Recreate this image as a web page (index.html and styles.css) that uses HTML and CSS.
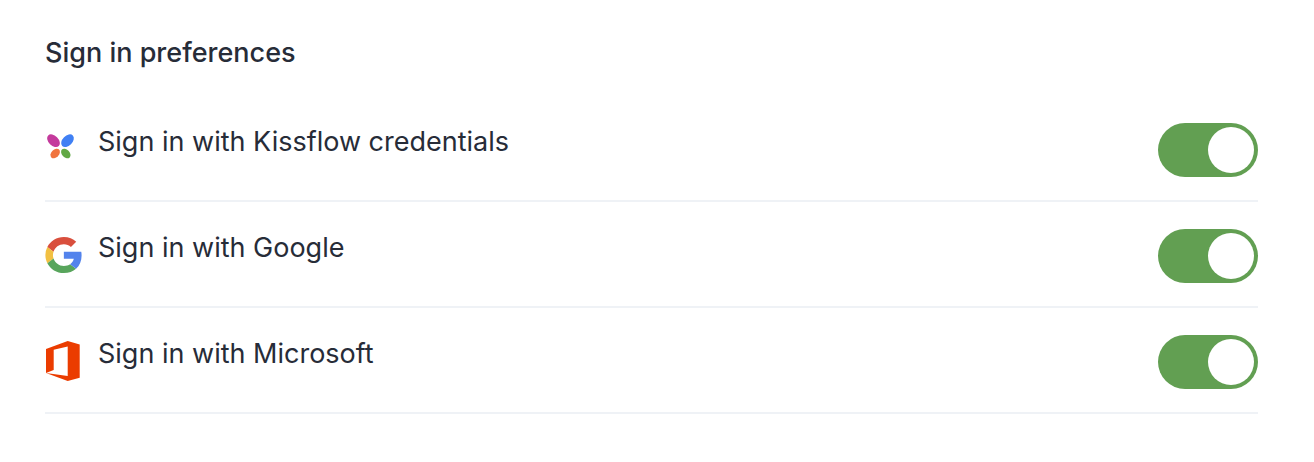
FILE: index.html
```html
<!DOCTYPE html>
<html lang="en">
<head>
<meta charset="utf-8">
<title>Sign in preferences</title>
<link rel="stylesheet" href="styles.css">
</head>
<body>
<main class="preferences">
  <h1 class="title">Sign in preferences</h1>
  <ul class="options">
    <li class="option">
      <svg class="icon" viewBox="0 0 38 44" aria-hidden="true">
        <ellipse fill="#c43a9c" cx="8.500" cy="12.700" rx="7.500" ry="4.900" transform="rotate(45 8.500 12.700)"/>
        <ellipse fill="#4080f4" cx="22.500" cy="12.700" rx="7.500" ry="4.900" transform="rotate(-45 22.500 12.700)"/>
        <ellipse fill="#f0743e" cx="10.200" cy="25.500" rx="5.500" ry="3.800" transform="rotate(-45 10.200 25.500)"/>
        <ellipse fill="#62a845" cx="20.800" cy="25.500" rx="5.500" ry="3.800" transform="rotate(45 20.800 25.500)"/>
      </svg>
      <label class="label" for="kissflow">Sign in with Kissflow credentials</label>
      <input class="toggle" type="checkbox" role="switch" id="kissflow" checked>
    </li>
    <li class="option">
      <svg class="icon" viewBox="0 0 38 44" aria-hidden="true">
        <g transform="translate(-1.300 1.400) scale(.84 .82)">
          <path fill="#d94f3d" d="M24 10.750c3.230 0 6.130 1.110 8.410 3.290l6.310-6.310C34.910 4.180 29.930 2 24 2 15.400 2 7.960 6.930 4.340 14.120l7.350 5.700c1.730-5.200 6.580-9.070 12.310-9.070z"/>
          <path fill="#f2c042" d="M11.690 28.180C11.250 26.860 11 25.450 11 24s.25-2.860.69-4.180l-7.350-5.700A22 22 0 0 0 2 24c0 3.550.85 6.910 2.340 9.880z"/>
          <path fill="#58a55c" d="M24 46c5.940 0 10.920-1.970 14.560-5.330l-7.110-5.520c-1.970 1.320-4.490 2.100-7.450 2.100-5.730 0-10.580-3.870-12.310-9.070l-7.350 5.700C7.960 41.070 15.400 46 24 46z"/>
          <path fill="#5383ec" d="M45.120 24.500c0-1.560-.14-3.060-.4-4.500H24v8.500h11.840c-.51 2.750-2.060 5.080-4.390 6.650l7.110 5.520c4.160-3.840 6.560-9.480 6.560-16.170z"/>
        </g>
      </svg>
      <label class="label" for="google">Sign in with Google</label>
      <input class="toggle" type="checkbox" role="switch" id="google" checked>
    </li>
    <li class="option">
      <svg class="icon" viewBox="0 0 38 44" aria-hidden="true">
        <path fill="#eb3c00" d="M1 9L22.700 1L34.700 4.400V37.700L22.700 41L1 33L22.700 36V6.500L8.700 9.700V30L1 33Z"/>
      </svg>
      <label class="label" for="microsoft">Sign in with Microsoft</label>
      <input class="toggle" type="checkbox" role="switch" id="microsoft" checked>
    </li>
  </ul>
</main>
</body>
</html>
```
FILE: styles.css
```css
* {
  box-sizing: border-box;
}

body {
  margin: 0;
  background: #fff;
  color: #272c38;
  font-family: Inter, "Liberation Sans", sans-serif;
}

.preferences {
  padding: 36px 56px 48px 45px;
}

.title {
  margin: 0;
  font-size: 27px;
  font-weight: 500;
  line-height: 34px;
}

.options {
  margin: 26px 0 0;
  padding: 0;
  list-style: none;
}

.option {
  display: flex;
  align-items: center;
  padding: 27px 0 23px;
  border-bottom: 2px solid #eff2f6;
}

.icon {
  flex: none;
  width: 38px;
  height: 44px;
}

.label {
  flex: 1;
  margin-left: 15px;
  padding-bottom: 16px;
  font-size: 27px;
  line-height: 34px;
}

.toggle {
  appearance: none;
  display: flex;
  justify-content: flex-end;
  width: 100px;
  height: 54px;
  margin: 0;
  padding: 4px;
  border-radius: 27px;
  background: #629f52;
  cursor: pointer;
}

.toggle::before {
  content: "";
  width: 46px;
  height: 46px;
  border-radius: 50%;
  background: #fff;
}

.toggle:not(:checked) {
  justify-content: flex-start;
  background: #b8bcc4;
}
```
